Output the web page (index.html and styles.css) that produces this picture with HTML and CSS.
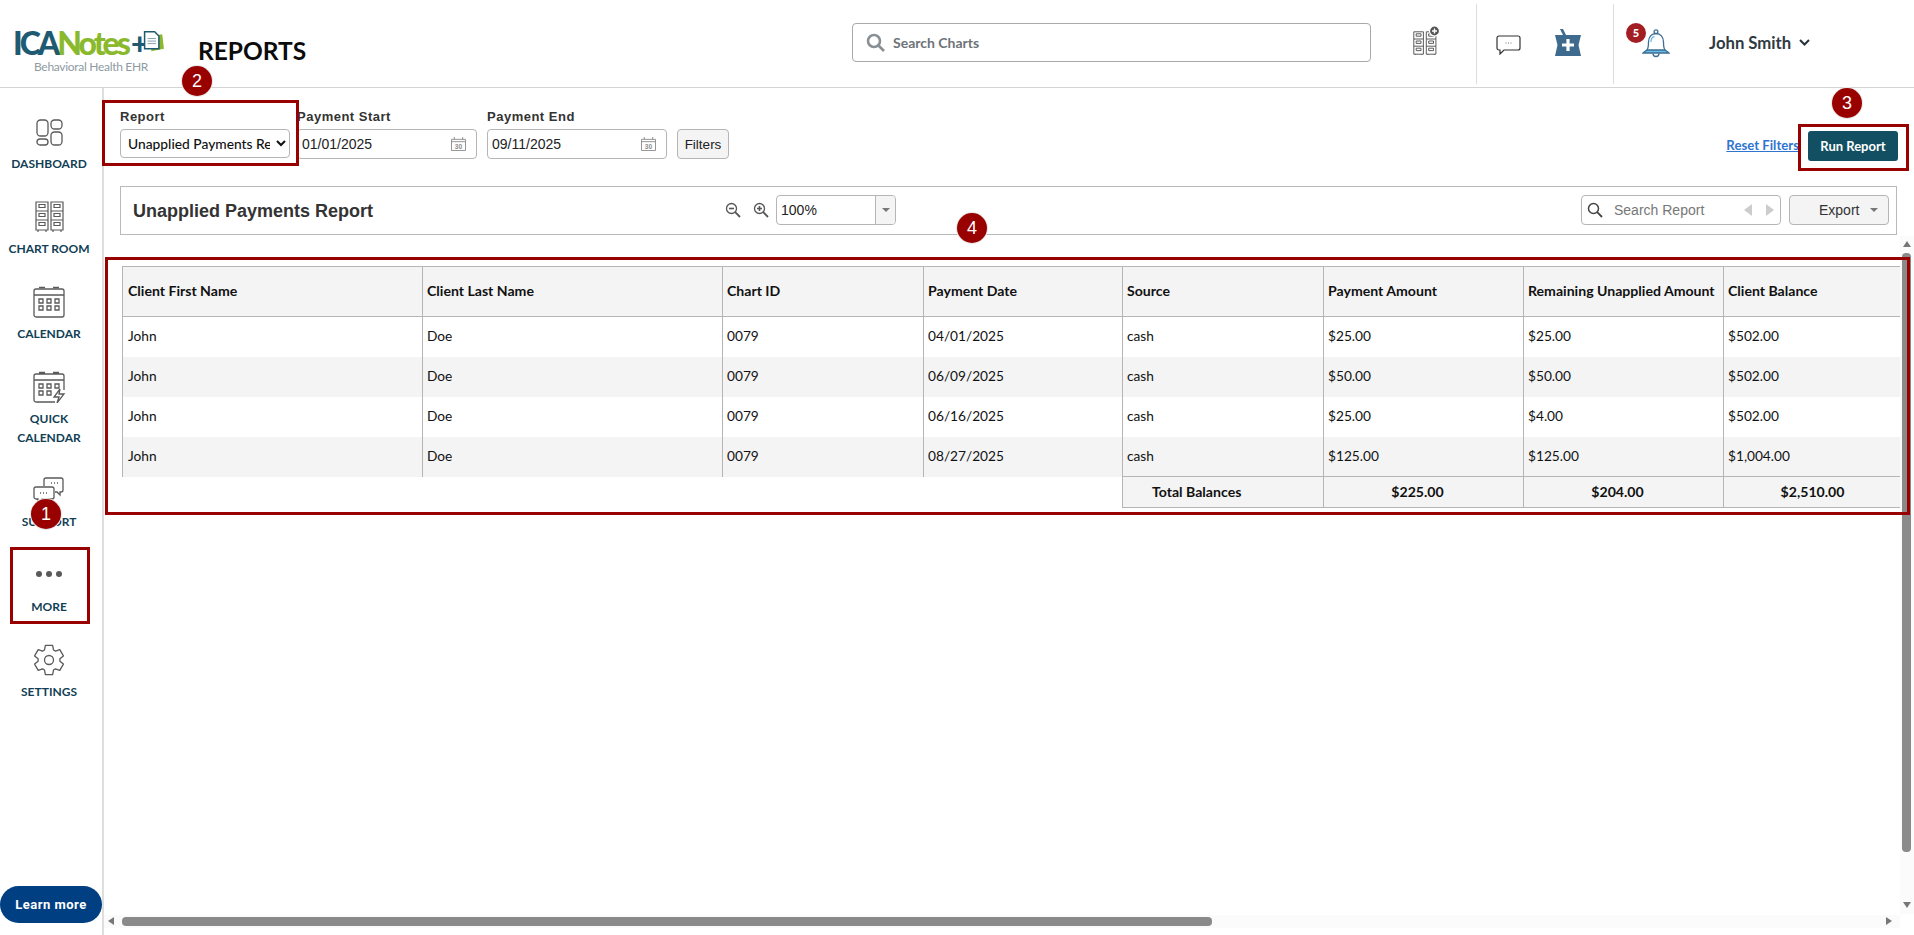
FILE: index.html
```html
<!DOCTYPE html>
<html lang="en">
<head>
<meta charset="utf-8">
<title>Reports</title>
<link rel="stylesheet" href="styles.css">
</head>
<body>
<svg class="defs" width="0" height="0" aria-hidden="true">
  <defs>
    <g id="cabinet">
      <path d="M1 1h12v28H1z M1 10h12 M1 19h12 M3 31v-2 M11 31v-2"/>
      <path d="M4 3.500h6v3H4z M4 12.500h6v3H4z M4 21.500h6v3H4z"/>
    </g>
    <g id="calendar">
      <rect x="1" y="3" width="30" height="28" rx="2"/>
      <path d="M1 9h30 M6 1.500h6 M20 1.500h6"/>
    </g>
  </defs>
</svg>

<header class="topbar">
  <div class="logo">
    <div class="logo-mark"><span class="logo-ica">ICA</span><span class="logo-notes">Notes</span><span class="logo-ica logo-plus">+</span>
      <svg class="logo-doc" width="22" height="21" viewBox="0 0 26 25">
        <path d="M11 6l13-2 2 17-15 3z" fill="#8ab92d"/>
        <path d="M3 1h12l5 5v15H3z" fill="#fff" stroke="#1f5a73" stroke-width="1.8"/>
        <path d="M6.500 9h10 M6.500 12h10 M6.500 15h10" stroke="#7b98a6" stroke-width="1.100"/>
      </svg>
    </div>
    <div class="logo-sub">Behavioral Health EHR</div>
  </div>
  <h1 class="page-title">REPORTS</h1>
  <div class="chart-search">
    <svg width="20" height="20" viewBox="0 0 20 20" fill="none" stroke="#8a8f94" stroke-width="2.600"><circle cx="8" cy="8" r="6"/><path d="M12.500 12.500L18 18"/></svg>
    <span>Search Charts</span>
  </div>
  <svg class="hd-chart" width="27" height="29" viewBox="0 0 27 29" fill="none" stroke="#555" stroke-width="1.200">
    <g transform="translate(0 5) scale(.8)"><use href="#cabinet"/></g>
    <g transform="translate(12.500 5) scale(.8)"><use href="#cabinet"/></g>
    <circle cx="21.500" cy="5" r="5" fill="#555" stroke="#fff"/>
    <path d="M21.500 2.500v5 M19 5h5" stroke="#fff" stroke-width="1.400"/>
  </svg>
  <div class="hd-divider hd-divider-a"></div>
  <svg class="hd-speech" width="25" height="20" viewBox="0 0 25 20" fill="none" stroke="#333" stroke-width="1.200">
    <path d="M3 1h19a2 2 0 0 1 2 2v10a2 2 0 0 1-2 2H8l-4 4v-4H3a2 2 0 0 1-2-2V3a2 2 0 0 1 2-2z"/>
    <path d="M9.500 8h1 M12 8h1 M14.500 8h1" stroke="#777"/>
  </svg>
  <svg class="hd-mortar" width="26" height="29" viewBox="0 0 26 29">
    <path d="M0 6h26l-2.500 10L26 27H0l2.500-11z" fill="#3e6a8d"/>
    <path d="M5 0l3 0 3 6H8z" fill="#3e6a8d"/>
    <path d="M13 10v12 M7 16h12" stroke="#fff" stroke-width="3.200"/>
  </svg>
  <div class="hd-divider hd-divider-b"></div>
  <svg class="hd-bell" width="28" height="29" viewBox="0 0 28 29" fill="none" stroke="#3d6d91" stroke-width="1.300">
    <path d="M1 24l4-3h18l4 3z" fill="#69bdea"/>
    <path d="M5 21c1.500-2 1.500-4 1.500-8 0-5 3-8.500 7.500-8.500s7.500 3.500 7.500 8.500c0 4 0 6 1.500 8"/>
    <circle cx="14" cy="2.700" r="1.900"/>
    <path d="M11 24.500a3 3 0 0 0 6 0"/>
    <path d="M9 13c0-3 1.500-5 3.500-5.500" stroke="#69bdea"/>
  </svg>
  <span class="user-name">John Smith</span>
  <svg class="user-caret" width="11" height="7" viewBox="0 0 11 7" fill="none" stroke="#26323a" stroke-width="2"><path d="M1 1l4.500 4.500L10 1"/></svg>
  <span class="bell-badge">5</span>
</header>

<div class="body-row">
  <nav class="sidebar">
    <a class="nav-item">
      <svg class="ico ico-dash" width="27" height="27" viewBox="0 0 27 27" fill="none" stroke="#5a5a5a" stroke-width="1.300">
        <rect x="1" y="1" width="11" height="16" rx="3.500"/><rect x="15" y="1" width="11" height="9" rx="3.500"/>
        <rect x="1" y="20" width="11" height="6" rx="3"/><rect x="15" y="13" width="11" height="13" rx="3.500"/>
      </svg>
      <span>DASHBOARD</span>
    </a>
    <a class="nav-item">
      <svg class="ico" width="29" height="32" viewBox="0 0 29 32" fill="none" stroke="#5a5a5a" stroke-width="1.200">
        <use href="#cabinet"/><g transform="translate(15 0)"><use href="#cabinet"/></g>
      </svg>
      <span>CHART ROOM</span>
    </a>
    <a class="nav-item">
      <svg class="ico" width="32" height="32" viewBox="0 0 32 32" fill="none" stroke="#5a5a5a" stroke-width="1.300">
        <use href="#calendar"/>
        <path d="M6 13h4v4H6z M14 13h4v4h-4z M22 13h4v4h-4z M6 20h4v4H6z M14 20h4v4h-4z M22 20h4v4h-4z"/>
      </svg>
      <span>CALENDAR</span>
    </a>
    <a class="nav-item nav-quick">
      <svg class="ico" width="33" height="32" viewBox="0 0 33 32" fill="none" stroke="#5a5a5a" stroke-width="1.300">
        <path d="M22 31H3a2 2 0 0 1-2-2V5a2 2 0 0 1 2-2h26a2 2 0 0 1 2 2v14 M1 9h30 M6 1.500h6 M20 1.500h6"/>
        <path d="M6 13h4v4H6z M14 13h4v4h-4z M22 13h4v4h-4z M6 20h4v4H6z M14 20h4v4h-4z"/>
        <path d="M27 18l-6 8h5l-2 6 7-9h-5z" fill="#fff"/>
      </svg>
      <span>QUICK<br>CALENDAR</span>
    </a>
    <a class="nav-item nav-support">
      <svg class="ico" width="32" height="29" viewBox="0 0 32 29" fill="none" stroke="#5a5a5a" stroke-width="1.300">
        <path d="M11 9V3a2 2 0 0 1 2-2h15a2 2 0 0 1 2 2v10a2 2 0 0 1-2 2h-1v3l-3-3h-2"/>
        <path d="M3 10h16a2 2 0 0 1 2 2v8a2 2 0 0 1-2 2H9l-4 5v-5H3a2 2 0 0 1-2-2v-8a2 2 0 0 1 2-2z" fill="#fff"/>
        <path d="M18 6h1 M21 6h1 M24 6h1 M7 16h1 M10 16h1 M13 16h1"/>
      </svg>
      <span>SUPPORT</span>
    </a>
    <a class="nav-item">
      <svg class="ico ico-more" width="28" height="8" viewBox="0 0 28 8" fill="#5a5a5a">
        <circle cx="4" cy="4" r="3"/><circle cx="14" cy="4" r="3"/><circle cx="24" cy="4" r="3"/>
      </svg>
      <span>MORE</span>
    </a>
    <a class="nav-item">
      <svg class="ico" width="32" height="32" viewBox="0 0 32 32" fill="none" stroke="#5a5a5a" stroke-width="1.300" stroke-linejoin="round">
        <polygon points="12.400,1.450 19.600,1.450 20.500,5.950 22.500,7.100 26.800,5.600 30.400,11.900 26.900,14.850 26.900,17.150 30.400,20.100 26.800,26.400 22.500,24.900 20.500,26.050 19.600,30.550 12.400,30.550 11.500,26.050 9.500,24.900 5.200,26.400 1.600,20.100 5.100,17.150 5.100,14.850 1.600,11.900 5.200,5.600 9.500,7.100 11.500,5.950"/>
        <circle cx="16" cy="16" r="4.500"/>
      </svg>
      <span>SETTINGS</span>
    </a>
    <button class="learn-more">Learn more</button>
  </nav>

  <main class="content">
    <form class="filters">
      <div class="field field-report">
        <label class="field-label">Report</label>
        <select class="report-select"><option>Unapplied Payments Report</option></select>
      </div>
      <div class="field">
        <label class="field-label">Payment Start</label>
        <div class="date-input"><span>01/01/2025</span>
          <svg width="15" height="14" viewBox="0 0 16 15" fill="none" stroke="#8d8d8d"><path d="M.5 2.500h15v12H.5z M.5 5h15 M3.500 0v3 M12.500 0v3"/><text x="8" y="12.500" text-anchor="middle" class="cal-num">30</text></svg>
        </div>
      </div>
      <div class="field field-end">
        <label class="field-label">Payment End</label>
        <div class="date-input"><span>09/11/2025</span>
          <svg width="15" height="14" viewBox="0 0 16 15" fill="none" stroke="#8d8d8d"><path d="M.5 2.500h15v12H.5z M.5 5h15 M3.500 0v3 M12.500 0v3"/><text x="8" y="12.500" text-anchor="middle" class="cal-num">30</text></svg>
        </div>
      </div>
      <button type="button" class="filters-btn">Filters</button>
      <a class="reset-link">Reset Filters</a>
      <button type="button" class="run-btn">Run Report</button>
    </form>

    <section class="report-bar">
      <h2 class="report-title">Unapplied Payments Report</h2>
      <div class="zoom-group">
        <svg width="16" height="16" viewBox="0 0 16 16" fill="none" stroke="#555" stroke-width="1.300"><circle cx="6.500" cy="6.500" r="5"/><path d="M10.200 10.200L15 15" stroke-width="1.800"/><path d="M4 6.500h5" stroke-width="1.600"/></svg>
        <svg class="zoom-plus" width="16" height="16" viewBox="0 0 16 16" fill="none" stroke="#555" stroke-width="1.300"><circle cx="6.500" cy="6.500" r="5"/><path d="M10.200 10.200L15 15" stroke-width="1.800"/><path d="M4 6.500h5 M6.500 4v5" stroke-width="1.600"/></svg>
        <div class="zoom-box"><span class="zoom-value">100%</span><span class="zoom-arrow"><i class="tri-down"></i></span></div>
      </div>
      <div class="report-search">
        <svg width="16" height="16" viewBox="0 0 16 16" fill="none" stroke="#444" stroke-width="1.500"><circle cx="6.500" cy="6.500" r="5"/><path d="M10.200 10.200L15 15" stroke-width="1.800"/></svg>
        <span class="report-search-text">Search Report</span>
        <i class="tri-left"></i><i class="tri-right"></i>
      </div>
      <div class="export-btn"><span>Export</span><i class="tri-down"></i></div>
    </section>

    <table class="report-table">
      <colgroup>
        <col class="c300"><col class="c300"><col class="c201"><col class="c199"><col class="c201"><col class="c200"><col class="c200"><col class="c178">
      </colgroup>
      <thead>
        <tr><th>Client First Name</th><th>Client Last Name</th><th>Chart ID</th><th>Payment Date</th><th>Source</th><th>Payment Amount</th><th>Remaining Unapplied Amount</th><th>Client Balance</th></tr>
      </thead>
      <tbody>
        <tr><td>John</td><td>Doe</td><td>0079</td><td>04/01/2025</td><td>cash</td><td>$25.00</td><td>$25.00</td><td>$502.00</td></tr>
        <tr class="alt"><td>John</td><td>Doe</td><td>0079</td><td>06/09/2025</td><td>cash</td><td>$50.00</td><td>$50.00</td><td>$502.00</td></tr>
        <tr><td>John</td><td>Doe</td><td>0079</td><td>06/16/2025</td><td>cash</td><td>$25.00</td><td>$4.00</td><td>$502.00</td></tr>
        <tr class="alt"><td>John</td><td>Doe</td><td>0079</td><td>08/27/2025</td><td>cash</td><td>$125.00</td><td>$125.00</td><td>$1,004.00</td></tr>
      </tbody>
      <tfoot>
        <tr><td class="blank" colspan="4"></td><td class="tot-label">Total Balances</td><td class="tot-shift">$225.00</td><td class="tot-shift">$204.00</td><td>$2,510.00</td></tr>
      </tfoot>
    </table>
  </main>
</div>

<div class="vscroll"><i class="tri-up sb-up"></i><div class="vthumb"></div><i class="tri-down sb-down"></i></div>
<div class="hscroll"><i class="tri-left sb-left"></i><div class="hthumb"></div><i class="tri-right sb-right"></i></div>

<div class="note-box box-more"></div>
<div class="note-box box-report"></div>
<div class="note-box box-run"></div>
<div class="note-box box-table"></div>
<span class="note-badge badge-1">1</span>
<span class="note-badge badge-2">2</span>
<span class="note-badge badge-3">3</span>
<span class="note-badge badge-4">4</span>
</body>
</html>
```

FILE: styles.css
```css
* { box-sizing: border-box; }
html, body { margin: 0; padding: 0; height: 935px; overflow: hidden; background: #fff; }
body { position: relative; font-family: "Lato", "Liberation Sans", sans-serif; color: #222; }
.defs { position: absolute; }

/* top bar */
.topbar { position: relative; display: flex; align-items: center; height: 88px; border-bottom: 1px solid #d4d4d4; }
.logo { width: 198px; padding: 13px 0 0 13px; flex: none; }
.logo-mark { display: flex; align-items: center; height: 32px; font-size: 32px; font-weight: 900; letter-spacing: -3px; line-height: 32px; }
.logo-ica { color: #1f5a73; }
.logo-notes { color: #8ab92d; }
.logo-plus { font-size: 30px; margin-left: 3px; }
.logo-doc { margin-left: -3px; margin-top: -3px; }
.logo-sub { margin: 0 0 0 21px; font-size: 12px; letter-spacing: -.3px; line-height: 15px; color: #8e9ba3; }
.page-title { margin: 14px 0 0; width: 109px; font-size: 24.500px; font-weight: 700; line-height: 31px; color: #0c0c0c; flex: none; white-space: nowrap; }
.chart-search { display: flex; align-items: center; gap: 7px; margin: 0 0 2px 545px; width: 519px; height: 39px; padding-left: 13px; border: 1px solid #a9a9a9; border-radius: 4px; font-size: 14px; font-weight: 700; color: #6d7378; flex: none; }
.hd-chart { margin: -6px 0 0 42px; flex: none; }
.hd-divider { width: 1px; height: 80px; background: #dcdcdc; flex: none; }
.hd-divider-a { margin-left: 36px; }
.hd-speech { margin: 3px 0 0 19px; flex: none; }
.hd-mortar { margin: 0 0 0 34px; flex: none; }
.hd-divider-b { margin-left: 32px; }
.hd-bell { margin-left: 28px; flex: none; }
.user-name { margin: 0 0 2px 39px; font-size: 16.700px; font-weight: 700; color: #303a42; white-space: nowrap; }
.user-caret { margin: 0 0 2px 8px; flex: none; }
.bell-badge { position: absolute; left: 1626px; top: 23px; width: 20px; height: 20px; border-radius: 50%; background: #a31e22; color: #fff; font-size: 11px; font-weight: 900; line-height: 20px; text-align: center; }

/* page body */
.body-row { display: flex; height: 847px; }
.sidebar { display: flex; flex-direction: column; width: 104px; flex: none; border-right: 2px solid #dedede; }
.nav-item { display: flex; flex-direction: column; align-items: center; justify-content: flex-end; width: 98px; height: 85px; font-size: 12px; font-weight: 700; line-height: 19px; color: #123f55; text-align: center; flex: none; }
.nav-quick { height: 104px; }
.nav-support { height: 84px; }
.ico { margin-bottom: 6px; flex: none; }
.ico-dash { margin-bottom: 8px; }
.ico-more { margin-bottom: 19px; }
.learn-more { margin: auto 0 12px; width: 102px; height: 37px; border: 0; border-radius: 19px; background: #003f82; color: #fff; font-family: "Roboto", "Liberation Sans", sans-serif; font-size: 13px; font-weight: 700; letter-spacing: .5px; flex: none; }

/* filters */
.content { flex: 1; min-width: 0; padding: 20px 16px 0 16px; }
.filters { display: flex; align-items: flex-end; height: 51px; font-family: "Liberation Sans", sans-serif; }
.field { display: flex; flex-direction: column; gap: 4px; }
.field-report { width: 177px; margin-bottom: 1px; }
.field-end { margin-left: 10px; }
.field-label { font-size: 13px; font-weight: 700; line-height: 17px; color: #333; letter-spacing: .5px; white-space: nowrap; }
.report-select { width: 170px; height: 29px; padding: 0 3px; border: 1px solid #b5b5b5; border-radius: 4px; background: #fff; font-family: "Lato", sans-serif; font-size: 13.800px; font-weight: 500; color: #111; }
.date-input { display: flex; align-items: center; justify-content: space-between; width: 180px; height: 30px; padding: 0 10px 0 4px; border: 1px solid #b5b5b5; border-radius: 4px; font-size: 14px; color: #222; }
.cal-num { font-family: "Liberation Sans", sans-serif; font-size: 7px; font-weight: 700; fill: #8d8d8d; stroke: none; }
.filters-btn { margin-left: 10px; width: 52px; height: 30px; padding: 0; border: 1px solid #b5b5b5; border-radius: 4px; background: #f4f4f4; font-family: "Liberation Sans", sans-serif; font-size: 13.500px; color: #222; }
.reset-link { margin: 0 9px 6px auto; font-family: "Lato", sans-serif; font-size: 13.200px; font-weight: 700; line-height: 16px; color: #2f74d0; text-decoration: underline; white-space: nowrap; }
.run-btn { width: 90px; height: 30px; margin-bottom: -2px; padding: 0; border: 0; border-radius: 3px; background: #134f63; color: #fff; font-family: "Lato", sans-serif; font-size: 13px; font-weight: 700; }

/* report toolbar */
.report-bar { display: flex; align-items: center; width: 1777px; height: 49px; margin-top: 27px; padding: 0 7px 1px 12px; border: 1px solid #b9b9b9; font-family: "Liberation Sans", sans-serif; }
.report-title { margin: 0; padding-top: 3px; font-size: 18px; font-weight: 700; color: #333; white-space: nowrap; }
.zoom-group { display: flex; align-items: center; margin-left: 352px; }
.zoom-plus { margin-left: 12px; }
.zoom-box { display: flex; width: 120px; height: 30px; margin-left: 7px; border: 1px solid #b5b5b5; border-radius: 4px; overflow: hidden; }
.zoom-value { flex: 1; padding-left: 4px; font-size: 14px; line-height: 28px; color: #222; }
.zoom-arrow { display: flex; align-items: center; justify-content: center; width: 20px; border-left: 1px solid #b5b5b5; background: #f4f4f4; }
.report-search { display: flex; align-items: center; width: 200px; height: 30px; margin-left: auto; padding-left: 5px; border: 1px solid #b5b5b5; border-radius: 4px; }
.report-search-text { margin-left: 11px; width: 130px; font-size: 14px; color: #777; }
.export-btn { display: flex; align-items: center; width: 100px; height: 30px; margin-left: 8px; padding: 0 10px 0 29px; border: 1px solid #b5b5b5; border-radius: 4px; background: #f4f4f4; font-size: 14px; color: #333; justify-content: space-between; }
.tri-down, .tri-up, .tri-left, .tri-right { display: block; width: 0; height: 0; flex: none; }
.tri-down { border-left: 4px solid transparent; border-right: 4px solid transparent; border-top: 4px solid #777; }
.report-search .tri-left { border-top: 6px solid transparent; border-bottom: 6px solid transparent; border-right: 8px solid #ccc; }
.report-search .tri-right { margin-left: 14px; border-top: 6px solid transparent; border-bottom: 6px solid transparent; border-left: 8px solid #ccc; }

/* table */
.report-table { margin: 31px 0 0 2px; width: 1779px; table-layout: fixed; border-collapse: collapse; font-size: 13.700px; color: #111; }
.c300 { width: 300px; }
.c201 { width: 201px; }
.c199 { width: 199px; }
.c200 { width: 200px; }
.c178 { width: 178px; }
.report-table th { height: 50px; padding: 0 4px 2px; background: #f4f4f4; border: 1px solid #b5b5b5; font-size: 14.100px; font-weight: 700; text-align: left; white-space: nowrap; }
.report-table td { height: 40px; padding: 0 4px 2px; border-left: 1px solid #b5b5b5; border-right: 1px solid #b5b5b5; }
.report-table th:first-child, .report-table td:first-child { padding-left: 5px; }
.report-table tr.alt td { background: #f4f4f4; }
.report-table tfoot td { height: 31px; background: #f4f4f4; border: 1px solid #b5b5b5; font-size: 14.100px; font-weight: 700; text-align: center; }
.report-table tfoot td.tot-label { padding-left: 29px; text-align: left; }
.report-table tfoot td.tot-shift { padding-right: 16px; }
.report-table tfoot td.blank { background: #fff; border-width: 0 1px 0 0; }

/* scrollbars */
.vscroll { position: absolute; left: 1900px; top: 236px; width: 14px; height: 678px; background: #fbfbfb; }
.vthumb { position: absolute; left: 2px; top: 17px; width: 9px; height: 599px; border-radius: 4px; background: #8a8a8a; }
.sb-up { position: absolute; left: 3px; top: 5px; border-left: 4px solid transparent; border-right: 4px solid transparent; border-bottom: 6px solid #777; }
.sb-down { position: absolute; left: 3px; top: 666px; border-left: 4px solid transparent; border-right: 4px solid transparent; border-top: 6px solid #777; }
.hscroll { position: absolute; left: 104px; top: 915px; width: 1796px; height: 13px; background: #fbfbfb; }
.hthumb { position: absolute; left: 18px; top: 2px; width: 1090px; height: 9px; border-radius: 4px; background: #8a8a8a; }
.sb-left { position: absolute; left: 4px; top: 2px; border-top: 4px solid transparent; border-bottom: 4px solid transparent; border-right: 6px solid #777; }
.sb-right { position: absolute; left: 1782px; top: 2px; border-top: 4px solid transparent; border-bottom: 4px solid transparent; border-left: 6px solid #777; }

/* tutorial annotations */
.note-box { position: absolute; border: 3px solid #990000; }
.box-more { left: 10px; top: 547px; width: 80px; height: 77px; }
.box-report { left: 102px; top: 100px; width: 197px; height: 66px; }
.box-run { left: 1798px; top: 124px; width: 111px; height: 47px; }
.box-table { left: 105px; top: 257px; width: 1805px; height: 258px; }
.note-badge { position: absolute; width: 30px; height: 30px; border-radius: 50%; background: #990000; color: #fff; font-family: "Liberation Sans", sans-serif; font-size: 18px; line-height: 30px; text-align: center; box-shadow: 0 0 0 1px #e8e8e8; }
.badge-1 { left: 31px; top: 499px; }
.badge-2 { left: 182px; top: 66px; }
.badge-3 { left: 1832px; top: 88px; }
.badge-4 { left: 957px; top: 213px; }
```
